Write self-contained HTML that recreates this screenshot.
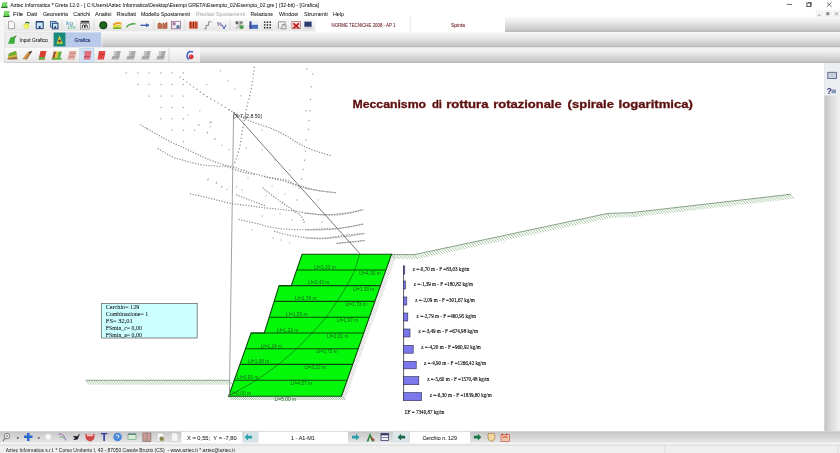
<!DOCTYPE html>
<html><head><meta charset="utf-8"><title>Greta</title>
<style>html,body{margin:0;padding:0;background:#fff;overflow:hidden;}svg{display:block;will-change:transform;}</style></head>
<body><svg width="840" height="453" viewBox="0 0 840 453">
<defs>
<linearGradient id="gbar" x1="0" y1="0" x2="0" y2="1">
<stop offset="0" stop-color="#f7f7f7"/><stop offset="0.3" stop-color="#ebebeb"/><stop offset="0.82" stop-color="#cbcbcb"/><stop offset="1" stop-color="#b8b8b8"/></linearGradient>
<linearGradient id="gtb1" x1="0" y1="0" x2="0" y2="1">
<stop offset="0" stop-color="#fbfbfb"/><stop offset="1" stop-color="#e6e6e6"/></linearGradient>
<linearGradient id="gbot" x1="0" y1="0" x2="0" y2="1">
<stop offset="0" stop-color="#c2c2c2"/><stop offset="0.2" stop-color="#cdcdcd"/><stop offset="0.85" stop-color="#e2e2e2"/><stop offset="1" stop-color="#ececec"/></linearGradient>
<linearGradient id="gside" x1="0" y1="0" x2="1" y2="0">
<stop offset="0" stop-color="#c2c2c2"/><stop offset="0.5" stop-color="#dedede"/><stop offset="1" stop-color="#f2f2f2"/></linearGradient>
</defs>
<rect x="0" y="0" width="840" height="453" fill="#ffffff"/>
<path d="M2.6 2.4 H7.4 L7.2 4.2 L5.2 4.6 L7.4 5.6 V7.4 H1.3 Z" fill="#48c040"/><path d="M3.4 3.2 H6.4 L4.4 5.2 L6.6 6.4 H2.6 Z" fill="#8ae070"/><line x1="1.3" y1="7.4" x2="7.4" y2="7.4" stroke="#0a4a0a" stroke-width="0.9"/>
<text x="10.5" y="7" font-family="Liberation Sans, sans-serif" font-size="5.8" fill="#1a1a1a" stroke="#1a1a1a" stroke-width="0.05" textLength="308.5" lengthAdjust="spacingAndGlyphs">Aztec Informatica * Greta 12.0 - [ C:\Users\Aztec Informatica\Desktop\Esempi GRETA\Esempio_02\Esempio_02.gre ] (32-bit) - [Grafica]</text>
<line x1="786.7" y1="4.4" x2="792" y2="4.4" stroke="#333" stroke-width="0.7"/>
<rect x="806.9" y="3" width="3.8" height="3.6" fill="none" stroke="#333" stroke-width="0.8"/><path d="M807.8 2.5 H811.4 V6" fill="none" stroke="#333" stroke-width="0.6"/>
<path d="M826.8 2.2 L831.6 6.8 M831.6 2.2 L826.8 6.8" stroke="#333" stroke-width="0.7"/>
<path d="M4.4 11.3 H9.5 L9.3 13.2 L7.2 13.6 L9.5 14.6 V16.6 H3.3 Z" fill="#48c040"/><path d="M5.2 12.1 H8.4 L6.3 14.2 L8.6 15.5 H4.5 Z" fill="#8ae070"/><line x1="3.3" y1="16.6" x2="9.5" y2="16.6" stroke="#0a4a0a" stroke-width="0.9"/>
<text x="13" y="16.1" font-family="Liberation Sans, sans-serif" font-size="5.8" fill="#1a1a1a" stroke="#1a1a1a" stroke-width="0.05" textLength="10.5" lengthAdjust="spacingAndGlyphs">File</text>
<text x="26.7" y="16.1" font-family="Liberation Sans, sans-serif" font-size="5.8" fill="#1a1a1a" stroke="#1a1a1a" stroke-width="0.05" textLength="10.5" lengthAdjust="spacingAndGlyphs">Dati</text>
<text x="42.9" y="16.1" font-family="Liberation Sans, sans-serif" font-size="5.8" fill="#1a1a1a" stroke="#1a1a1a" stroke-width="0.05" textLength="25" lengthAdjust="spacingAndGlyphs">Geometria</text>
<text x="73.3" y="16.1" font-family="Liberation Sans, sans-serif" font-size="5.8" fill="#1a1a1a" stroke="#1a1a1a" stroke-width="0.05" textLength="17" lengthAdjust="spacingAndGlyphs">Carichi</text>
<text x="94.9" y="16.1" font-family="Liberation Sans, sans-serif" font-size="5.8" fill="#1a1a1a" stroke="#1a1a1a" stroke-width="0.05" textLength="16.5" lengthAdjust="spacingAndGlyphs">Analisi</text>
<text x="116.6" y="16.1" font-family="Liberation Sans, sans-serif" font-size="5.8" fill="#1a1a1a" stroke="#1a1a1a" stroke-width="0.05" textLength="19.5" lengthAdjust="spacingAndGlyphs">Risultati</text>
<text x="141" y="16.1" font-family="Liberation Sans, sans-serif" font-size="5.8" fill="#1a1a1a" stroke="#1a1a1a" stroke-width="0.05" textLength="49" lengthAdjust="spacingAndGlyphs">Modello Spostamenti</text>
<text x="196" y="16.1" font-family="Liberation Sans, sans-serif" font-size="5.6" fill="#a0a0a0" textLength="49" lengthAdjust="spacingAndGlyphs">Risultati Spostamenti</text>
<text x="250.6" y="16.1" font-family="Liberation Sans, sans-serif" font-size="5.8" fill="#1a1a1a" stroke="#1a1a1a" stroke-width="0.05" textLength="22.4" lengthAdjust="spacingAndGlyphs">Relazione</text>
<text x="279" y="16.1" font-family="Liberation Sans, sans-serif" font-size="5.8" fill="#1a1a1a" stroke="#1a1a1a" stroke-width="0.05" textLength="19" lengthAdjust="spacingAndGlyphs">Window</text>
<text x="304" y="16.1" font-family="Liberation Sans, sans-serif" font-size="5.8" fill="#1a1a1a" stroke="#1a1a1a" stroke-width="0.05" textLength="23.8" lengthAdjust="spacingAndGlyphs">Strumenti</text>
<text x="333" y="16.1" font-family="Liberation Sans, sans-serif" font-size="5.8" fill="#1a1a1a" stroke="#1a1a1a" stroke-width="0.05" textLength="11" lengthAdjust="spacingAndGlyphs">Help</text>
<rect x="816" y="10.8" width="7" height="6" fill="#f4f4f4" stroke="#e0e0e0" stroke-width="0.3"/>
<rect x="824.5" y="10.8" width="7" height="6" fill="#f4f4f4" stroke="#e0e0e0" stroke-width="0.3"/>
<rect x="833" y="10.8" width="7" height="6" fill="#f4f4f4" stroke="#e0e0e0" stroke-width="0.3"/>
<line x1="818" y1="15.2" x2="820.5" y2="15.2" stroke="#666" stroke-width="0.6"/>
<rect x="826.3" y="12.2" width="3" height="3" fill="#888"/>
<path d="M835 12.3 L838 15.3 M838 12.3 L835 15.3" stroke="#666" stroke-width="0.6"/>
<rect x="5" y="18" width="311.5" height="13.5" fill="url(#gtb1)"/>
<rect x="505" y="17" width="335" height="15" fill="url(#gbar)"/>
<rect x="315.5" y="17" width="94.5" height="14.5" fill="#ffffff"/>
<rect x="410.8" y="17" width="94.2" height="14.5" fill="#ffffff"/>
<line x1="410.3" y1="17" x2="410.3" y2="31.5" stroke="#d8d8d8" stroke-width="0.6"/>
<text x="363.5" y="27.4" font-family="Liberation Sans, sans-serif" font-size="5.2" fill="#6a1c24" stroke="#6a1c24" stroke-width="0.08" text-anchor="middle" textLength="64" lengthAdjust="spacingAndGlyphs">NORME TECNICHE 2008 - AP 1</text>
<text x="458" y="27.4" font-family="Liberation Sans, sans-serif" font-size="5.2" fill="#6a1c24" stroke="#6a1c24" stroke-width="0.08" text-anchor="middle" textLength="14" lengthAdjust="spacingAndGlyphs">Spinta</text>
<g transform="translate(8,20.8)"><path d="M0.5 0.5 H4.5 L6.5 2.5 V7.8 H0.5 Z" fill="#fafafa" stroke="#777" stroke-width="0.6"/></g>
<g transform="translate(22,20.8)"><ellipse cx="4.3" cy="5.3" rx="3" ry="2.6" fill="#e2e84a"/><ellipse cx="3.8" cy="5.8" rx="1.6" ry="1.3" fill="#f4f480"/><path d="M3.2 2.6 Q5.6 0.6 7.4 2.6" stroke="#2a6a2a" stroke-width="1.1" fill="none"/></g>
<g transform="translate(35.7,20.8)"><path d="M0.5 0.8 H7.5 V7.8 H0.5 Z" fill="#c8e8f8" stroke="#1e3a6e" stroke-width="1"/><rect x="0.5" y="0.4" width="7" height="1.2" fill="#1e3a6e"/><circle cx="4" cy="6.2" r="1.1" fill="#14304e"/></g>
<g transform="translate(50,20.8)"><rect x="0.5" y="0.6" width="5.6" height="5.6" fill="#c8e8f8" stroke="#3a5a8e" stroke-width="0.9"/><rect x="2.4" y="2.4" width="5.6" height="5.6" fill="#c8e8f8" stroke="#1e3a6e" stroke-width="1"/><circle cx="5.2" cy="6.4" r="1" fill="#14304e"/></g>
<line x1="62" y1="19.5" x2="62" y2="30" stroke="#c8c8c8" stroke-width="0.5"/>
<g transform="translate(66,20.8)"><text x="0.3" y="4" font-family="Liberation Sans, sans-serif" font-size="5.2" fill="#3a88b0" textLength="6.6" lengthAdjust="spacingAndGlyphs">kg</text><text x="1.5" y="8.3" font-family="Liberation Sans, sans-serif" font-size="5.2" fill="#50b080" textLength="8.3" lengthAdjust="spacingAndGlyphs">cm</text></g>
<g transform="translate(80,20.8)"><rect x="0.7" y="0" width="8.5" height="1.8" fill="#333"/><rect x="0.7" y="2.6" width="8.5" height="5.6" fill="#f4f4f4" stroke="#555" stroke-width="0.5"/><path d="M2.3 7 V5.3 A1.2 1.2 0 0 1 4.7 5.3 V7 M4.9 7 V5.3 A1.2 1.2 0 0 1 7.3 5.3 V7" stroke="#111" stroke-width="0.9" fill="none"/></g>
<line x1="94" y1="19.5" x2="94" y2="30" stroke="#c8c8c8" stroke-width="0.5"/>
<g transform="translate(99,20.8)"><circle cx="4.3" cy="4.5" r="4" fill="#164a18"/><circle cx="4.3" cy="4.5" r="2.6" fill="#1e6a22"/></g>
<g transform="translate(112.5,20.8)"><path d="M0.5 3 Q5 0 9 2 L9 4 Q5 2 0.5 5 Z" fill="#e8a020"/><path d="M0.5 5 Q5 3 9 4.5 L9 6.5 Q5 5 0.5 7.5 Z" fill="#e6d83a"/><path d="M0.5 7 Q5 5.5 9 7 V8.3 H0.5 Z" fill="#7ab030"/></g>
<g transform="translate(126,20.8)"><path d="M0.5 6.5 Q3 2.5 9.5 3" stroke="#4aa040" stroke-width="1.3" fill="none"/></g>
<g transform="translate(140,20.8)"><path d="M0.5 4.5 H9" stroke="#3a5ab0" stroke-width="1.3"/><path d="M6 2.5 L9.5 4.5 L6 6.5" fill="#3a5ab0"/></g>
<line x1="154" y1="19.5" x2="154" y2="30" stroke="#c8c8c8" stroke-width="0.5"/>
<g transform="translate(157.5,20.8)"><path d="M0.5 8 V3 L2 2 V8 M3 8 V2.5 L4.5 3.5 V8 M5.5 8 V2 L7 3 V8 M8 8 V2.5 L9.5 1.5 V8" fill="#c87a50" stroke="#a04020" stroke-width="0.6"/></g>
<g transform="translate(171,20.8)"><rect x="0.5" y="0.5" width="9" height="7.5" fill="none" stroke="#8a5a8a" stroke-width="0.7"/><rect x="1.5" y="1.5" width="3" height="3" fill="#a070a0"/><rect x="5.5" y="4.5" width="3" height="3" fill="#5070a0"/></g>
<line x1="185" y1="19.5" x2="185" y2="30" stroke="#c8c8c8" stroke-width="0.5"/>
<g transform="translate(188.6,20.8)"><rect x="0.3" y="0.8" width="9" height="7" fill="#e07050"/><path d="M2.2 0.8 V7.8 M4.8 0.8 V7.8 M7.4 0.8 V7.8" stroke="#902010" stroke-width="1"/></g>
<g transform="translate(203.6,20.8)"><path d="M0.5 8 H2.5 V4.5 H5 V1 H8" fill="none" stroke="#444" stroke-width="0.6"/></g>
<g transform="translate(217,20.8)"><text x="0" y="5" font-family="Liberation Sans, sans-serif" font-size="5.5" fill="#8060a0" font-weight="bold">%</text><path d="M5 4 L7 8 L9 4" stroke="#3a5ab0" stroke-width="1" fill="none"/></g>
<line x1="230" y1="19.5" x2="230" y2="30" stroke="#c8c8c8" stroke-width="0.5"/>
<g transform="translate(235,20.8)"><path d="M1 8 L8 0.5" stroke="#555" stroke-width="0.6"/><rect x="0.5" y="0.5" width="3" height="3" fill="#6a6a6a"/><rect x="4.5" y="4.5" width="4" height="3.5" fill="#4a9a4a"/><rect x="4.5" y="0.5" width="3" height="3" fill="#888"/></g>
<g transform="translate(249,20.8)"><rect x="0.5" y="0.5" width="8.5" height="7.5" fill="#e8eef8"/><rect x="0.5" y="4" width="8.5" height="4" fill="#4a6ac0"/><rect x="0.5" y="0.5" width="2" height="7.5" fill="#3a4a90"/></g>
<g transform="translate(263.6,20.8)"><rect x="0.3" y="0.6" width="1.5" height="1.5" fill="#222"/><rect x="0.3" y="3.4" width="1.5" height="1.5" fill="#222"/><rect x="0.3" y="6.199999999999999" width="1.5" height="1.5" fill="#222"/><rect x="3.0999999999999996" y="0.6" width="1.5" height="1.5" fill="#222"/><rect x="3.0999999999999996" y="3.4" width="1.5" height="1.5" fill="#222"/><rect x="3.0999999999999996" y="6.199999999999999" width="1.5" height="1.5" fill="#222"/><rect x="5.8999999999999995" y="0.6" width="1.5" height="1.5" fill="#222"/><rect x="5.8999999999999995" y="3.4" width="1.5" height="1.5" fill="#222"/><rect x="5.8999999999999995" y="6.199999999999999" width="1.5" height="1.5" fill="#222"/></g>
<g transform="translate(277.9,20.8)"><path d="M0.5 8 V1 H8 M2.5 8 L7.5 2 M4 4 H8 V8 H3" fill="none" stroke="#555" stroke-width="0.6"/></g>
<g transform="translate(291.4,20.8)"><rect x="0.5" y="0.5" width="8.5" height="7.5" fill="#f0d8d8" stroke="#a04040" stroke-width="0.5"/><path d="M2 2.5 L7.5 7.5 M7.5 2.5 L2 7.5" stroke="#c01818" stroke-width="1.6"/></g>
<g transform="translate(304,20.8)"><rect x="0.5" y="1" width="7" height="5" fill="#2a3a6a" stroke="#6a7aa0" stroke-width="0.5"/><rect x="1" y="6.5" width="8" height="1.6" fill="#d0d0d8"/></g>
<rect x="0" y="32.2" width="840" height="15.1" fill="url(#gbar)"/>
<line x1="0" y1="47.3" x2="840" y2="47.3" stroke="#c4c4c4" stroke-width="0.6"/>
<rect x="4.6" y="32.5" width="48.4" height="14.6" fill="#ececec" stroke="#d6d6d6" stroke-width="0.4"/>
<path d="M8 43.7 L10.5 37.5 L14 36.5 L16.4 35.9 L15 38.5 L14.5 43.7 Z" fill="#3ab03a"/><path d="M14.5 36.5 L16.4 35.9" stroke="#a02020" stroke-width="0.7"/>
<text x="19.6" y="41.9" font-family="Liberation Sans, sans-serif" font-size="5.8" fill="#1a1a1a" stroke="#1a1a1a" stroke-width="0.05" textLength="28.2" lengthAdjust="spacingAndGlyphs">Input Grafico</text>
<rect x="53.7" y="32.4" width="47.7" height="14.7" fill="#b8c9ea"/><line x1="101.9" y1="32.4" x2="101.9" y2="47" stroke="#fafafa" stroke-width="0.7"/>
<rect x="53.7" y="32.6" width="11.7" height="13.8" fill="#178a7a"/>
<path d="M56.5 44 L59.5 35.5 L62.8 44 Z" fill="#d8d838"/><circle cx="59.6" cy="41" r="1.4" fill="#7a3a2a"/><path d="M57 44 L62 44" stroke="#3a9a3a" stroke-width="0.8"/>
<text x="74.6" y="41.9" font-family="Liberation Sans, sans-serif" font-size="5.8" fill="#1a2a6a" stroke="#1a2a6a" stroke-width="0.12" textLength="15.7" lengthAdjust="spacingAndGlyphs">Grafica</text>
<rect x="0" y="47.6" width="840" height="15.4" fill="url(#gbar)"/>
<rect x="4.8" y="47.8" width="164" height="14.6" fill="url(#gtb1)"/>
<rect x="169" y="47.8" width="31" height="14.6" fill="url(#gtb1)"/>
<g transform="translate(7,50.5)"><path d="M2 3 L9 0.5 L10.5 9 H0.5 Z" fill="#a07040"/><path d="M2 3 L9 0.5 L9.5 4 L1.5 6 Z" fill="#6ab030"/><path d="M1.2 6 L9.5 4 L9.8 6 L1 7.5 Z" fill="#d0c040"/></g>
<g transform="translate(22.6,50.5)"><path d="M0 8.5 L5.5 1.5 L9.5 0.5 L4.5 9 Z" fill="#b07a3a"/><path d="M1 7.5 L5 2.5 L6.5 2.2 L2.5 8 Z" fill="#e0a050"/><path d="M6 1.5 L9.5 0.5 L8 3.5 Z" fill="#3a3a3a"/></g>
<g transform="translate(38,50.5)"><path d="M2.5 0.5 H8.5 L6.5 9 H0.5 Z" fill="#d84030"/><path d="M1.1 6.5 H7.1 L6.5 9 H0.5 Z" fill="#5ab040"/></g>
<g transform="translate(51.8,50.5)"><path d="M2 1 H4.5 L2.5 9 H0 Z" fill="#a05030"/><path d="M4.5 1 H7 L5 9 H2.5 Z" fill="#e0c030"/><path d="M7 1 H10 L8 9 H5 Z" fill="#60b040"/><path d="M0 7.5 H10 V9 H0 Z" fill="#58b038"/></g>
<g transform="translate(67,50.5)"><path d="M2.5 0.5 H9.5 L7.5 9 H0.5 Z" fill="#e0a8a0"/><path d="M3 3 H8.8 M2.2 6 H8" stroke="#c07870" stroke-width="0.6"/></g>
<rect x="79.8" y="48.2" width="14.2" height="14" fill="#d2e2f4" stroke="#a8c4e4" stroke-width="0.4"/>
<g transform="translate(83,50.5)"><path d="M2 0.5 H8.5 L7 9 H0.5 Z" fill="#e07080"/><path d="M0.5 2 L2 0.5" stroke="#3a8ac0" stroke-width="0.6"/><path d="M1 6 H7.5" stroke="#804050" stroke-width="0.6"/></g>
<g transform="translate(97,50.5)"><path d="M2 0.5 H8.5 L7 9 H0.5 Z" fill="#e04848"/><path d="M1.5 4 H8" stroke="#b02828" stroke-width="0.5"/></g>
<g transform="translate(111,50.5)"><path d="M3.5 0.5 H9.8 L7.8 9 H0.3 L1.2 6 H2.6 Z" fill="#ababab"/><path d="M3.5 0.5 H6 L4.6 6 H2.6 Z" fill="#c4c4c4"/><path d="M1.1 6.3 H8.5" stroke="#8c8c8c" stroke-width="0.5"/></g>
<g transform="translate(126,50.5)"><path d="M3.5 0.5 H9.8 L7.8 9 H0.3 L1.2 6 H2.6 Z" fill="#ababab"/><path d="M3.5 0.5 H6 L4.6 6 H2.6 Z" fill="#c4c4c4"/><path d="M1.1 6.3 H8.5" stroke="#8c8c8c" stroke-width="0.5"/></g>
<g transform="translate(141,50.5)"><path d="M3.5 0.5 H9.8 L7.8 9 H0.3 L1.2 6 H2.6 Z" fill="#ababab"/><path d="M3.5 0.5 H6 L4.6 6 H2.6 Z" fill="#c4c4c4"/><path d="M1.1 6.3 H8.5" stroke="#8c8c8c" stroke-width="0.5"/></g>
<g transform="translate(156,50.5)"><path d="M3.5 0.5 H9.8 L7.8 9 H0.3 L1.2 6 H2.6 Z" fill="#ababab"/><path d="M3.5 0.5 H6 L4.6 6 H2.6 Z" fill="#c4c4c4"/><path d="M1.1 6.3 H8.5" stroke="#8c8c8c" stroke-width="0.5"/></g>
<line x1="169" y1="48.5" x2="169" y2="62" stroke="#b8b8b8" stroke-width="0.5"/>
<g transform="translate(185,50.5)"><path d="M8 1.6 Q4 -0.2 2.4 3.5 Q1 7.8 4.5 8.6" stroke="#4a6ec8" stroke-width="1.7" fill="none"/><circle cx="6.2" cy="6.3" r="2.4" fill="#d82838"/><circle cx="5.6" cy="5.6" r="0.8" fill="#f08080"/></g>
<rect x="0" y="17.5" width="4.5" height="45.5" fill="#f6f6f6"/><line x1="4.6" y1="17.5" x2="4.6" y2="63" stroke="#dcdcdc" stroke-width="0.5"/>
<rect x="0" y="63" width="824.3" height="368.3" fill="#ffffff"/>
<clipPath id="cv"><rect x="0" y="63" width="824.3" height="368.3"/></clipPath>
<g clip-path="url(#cv)">
<rect x="125.7" y="72.3" width="1.2" height="1.2" fill="#a0a0a0"/>
<rect x="137.2" y="72.3" width="1.2" height="1.2" fill="#a0a0a0"/>
<rect x="148.5" y="72.3" width="1.2" height="1.2" fill="#a0a0a0"/>
<rect x="160.4" y="72.3" width="1.2" height="1.2" fill="#a0a0a0"/>
<rect x="171.6" y="72.3" width="1.2" height="1.2" fill="#a0a0a0"/>
<rect x="182.7" y="72.3" width="1.2" height="1.2" fill="#a0a0a0"/>
<rect x="137.2" y="83.8" width="1.2" height="1.2" fill="#a0a0a0"/>
<rect x="148.5" y="83.8" width="1.2" height="1.2" fill="#a0a0a0"/>
<rect x="160.4" y="83.8" width="1.2" height="1.2" fill="#a0a0a0"/>
<rect x="171.6" y="83.8" width="1.2" height="1.2" fill="#a0a0a0"/>
<rect x="182.7" y="83.8" width="1.2" height="1.2" fill="#a0a0a0"/>
<rect x="148.5" y="95.5" width="1.2" height="1.2" fill="#a0a0a0"/>
<rect x="160.4" y="95.5" width="1.2" height="1.2" fill="#a0a0a0"/>
<rect x="171.6" y="95.5" width="1.2" height="1.2" fill="#a0a0a0"/>
<rect x="182.7" y="95.5" width="1.2" height="1.2" fill="#a0a0a0"/>
<rect x="160.4" y="107.0" width="1.2" height="1.2" fill="#a0a0a0"/>
<rect x="171.6" y="107.0" width="1.2" height="1.2" fill="#a0a0a0"/>
<rect x="182.7" y="107.0" width="1.2" height="1.2" fill="#a0a0a0"/>
<rect x="160.4" y="118.2" width="1.2" height="1.2" fill="#a0a0a0"/>
<rect x="171.6" y="118.2" width="1.2" height="1.2" fill="#a0a0a0"/>
<rect x="182.7" y="118.2" width="1.2" height="1.2" fill="#a0a0a0"/>
<rect x="171.6" y="129.7" width="1.2" height="1.2" fill="#a0a0a0"/>
<rect x="182.7" y="129.7" width="1.2" height="1.2" fill="#a0a0a0"/>
<rect x="194.0" y="129.7" width="1.2" height="1.2" fill="#a0a0a0"/>
<rect x="182.7" y="141.1" width="1.2" height="1.2" fill="#a0a0a0"/>
<path d="M228.90 110.00h1.20M231.19 111.42h1.20M233.57 112.70h1.20M235.94 113.99h1.20M238.31 115.29h1.20M240.69 116.57h1.20M243.07 117.83h1.20M245.48 119.06h1.20M247.91 120.24h1.20M250.37 121.35h1.20M252.87 122.37h1.20M255.41 123.29h1.20M257.97 124.15h1.20M260.54 124.97h1.20M263.11 125.79h1.20M265.68 126.63h1.20M268.23 127.51h1.20M270.75 128.48h1.20M273.23 129.54h1.20M275.68 130.67h1.20M278.11 131.86h1.20M280.50 133.10h1.20M282.88 134.38h1.20M285.25 135.68h1.20M287.60 137.00h1.20M289.92 138.39h1.20M292.20 139.83h1.20M294.48 141.28h1.20M296.77 142.71h1.20M299.09 144.09h1.20M301.46 145.38h1.20M303.89 146.55h1.20M306.36 147.64h1.20M308.86 148.67h1.20M311.38 149.64h1.20M313.92 150.57h1.20M316.46 151.47h1.20M319.01 152.35h1.20M321.59 153.15h1.20M324.18 153.91h1.20M326.78 154.63h1.20M329.39 155.35h1.20" stroke="#8a8a8a" stroke-width="1.20" opacity="1.0" fill="none"/>
<path d="M140.00 125.00h1.20M142.34 126.35h1.20M144.68 127.69h1.20M147.02 129.04h1.20M149.37 130.38h1.20M151.71 131.71h1.20M154.06 133.04h1.20M156.41 134.38h1.20M158.75 135.72h1.20M161.10 137.05h1.20M163.46 138.37h1.20M165.83 139.66h1.20M168.22 140.91h1.20M170.64 142.11h1.20M173.08 143.27h1.20M175.54 144.39h1.20M178.00 145.49h1.20M180.46 146.60h1.20M182.92 147.72h1.20M185.36 148.88h1.20M187.79 150.05h1.20M190.22 151.23h1.20M192.65 152.40h1.20M195.09 153.55h1.20M197.55 154.68h1.20M200.00 155.81h1.20M202.45 156.95h1.20M204.91 158.06h1.20M207.38 159.15h1.20M209.87 160.20h1.20M212.38 161.19h1.20M214.92 162.10h1.20M217.48 162.96h1.20M220.05 163.77h1.20M222.64 164.55h1.20M225.23 165.31h1.20M227.82 166.06h1.20M230.40 166.47h1.20M233.01 167.18h1.20M235.59 167.97h1.20M238.17 168.77h1.20M240.74 169.58h1.20M243.32 170.40h1.20M245.89 171.20h1.20M248.47 172.01h1.20M251.05 172.80h1.20M253.64 173.58h1.20M256.23 174.34h1.20M258.83 175.07h1.20M261.43 175.79h1.20M264.04 176.47h1.20M266.67 177.11h1.20M269.30 177.69h1.20M271.95 178.21h1.20M274.62 178.61h1.20M277.30 178.93h1.20M279.99 179.23h1.20M282.66 179.58h1.20M285.32 180.07h1.20M287.89 180.89h1.20M290.28 182.13h1.20M292.57 183.56h1.20M294.98 184.76h1.20M297.53 185.65h1.20M300.12 186.42h1.20M302.73 187.13h1.20M305.34 187.80h1.20M307.97 188.43h1.20M310.60 189.04h1.20M313.24 189.62h1.20M315.88 190.15h1.20M318.54 190.64h1.20M321.20 191.10h1.20M323.87 191.52h1.20M326.54 191.88h1.20M329.23 192.17h1.20M331.91 192.41h1.20M334.61 192.63h1.20" stroke="#8a8a8a" stroke-width="1.20" opacity="1.0" fill="none"/>
<path d="M157.70 148.80h1.20M160.02 150.19h1.20M162.32 151.59h1.20M164.64 152.98h1.20M166.98 154.33h1.20M169.35 155.61h1.20M171.78 156.79h1.20M174.28 157.81h1.20M176.83 158.69h1.20M179.42 159.47h1.20M182.02 160.18h1.20M184.63 160.87h1.20M187.24 161.56h1.20M189.86 162.24h1.20M192.48 162.89h1.20M195.11 163.50h1.20M197.75 164.07h1.20M200.40 164.57h1.20M203.07 164.98h1.20M205.75 165.31h1.20M208.44 165.56h1.20M211.13 165.77h1.20M213.82 165.95h1.20M216.52 166.12h1.20M219.21 166.27h1.20M221.91 166.23h1.20M224.61 166.28h1.20M227.25 166.80h1.20M229.80 167.70h1.20M232.29 168.75h1.20M234.78 169.78h1.20M237.32 170.70h1.20M239.91 171.44h1.20M242.53 172.10h1.20M245.16 172.72h1.20M247.79 173.32h1.20M250.43 173.90h1.20M253.07 174.48h1.20" stroke="#8a8a8a" stroke-width="1.20" opacity="1.0" fill="none"/>
<path d="M264.10 176.70h1.20M266.74 177.25h1.20M269.39 177.80h1.20M272.03 178.36h1.20M274.66 178.95h1.20M277.29 179.57h1.20M279.90 180.24h1.20M282.50 180.98h1.20M285.09 181.77h1.20M287.66 182.57h1.20M290.24 183.38h1.20M292.82 184.17h1.20M295.41 184.94h1.20M298.01 185.68h1.20M300.61 186.39h1.20M303.22 187.09h1.20M305.83 187.79h1.20M308.44 188.48h1.20" stroke="#8a8a8a" stroke-width="1.20" opacity="1.0" fill="none"/>
<path d="M190.00 193.90h1.20M192.63 194.49h1.20M195.27 195.08h1.20M197.91 195.67h1.20M200.54 196.26h1.20M203.17 196.85h1.20M205.80 197.46h1.20M208.43 198.07h1.20M211.06 198.70h1.20M213.68 199.36h1.20M216.29 200.03h1.20M218.91 200.71h1.20M221.52 201.38h1.20M224.14 202.05h1.20M226.76 202.70h1.20M229.39 203.32h1.20M232.03 203.86h1.20M234.70 204.26h1.20M237.39 204.44h1.20M240.08 204.69h1.20M242.76 205.03h1.20M245.44 205.38h1.20M248.12 205.73h1.20M250.79 206.09h1.20M253.47 206.44h1.20M256.15 206.79h1.20M258.82 207.14h1.20M261.50 207.48h1.20M264.18 207.81h1.20M266.86 208.12h1.20M269.55 208.42h1.20M272.23 208.70h1.20M274.92 208.97h1.20M277.61 209.23h1.20M280.29 209.49h1.20M282.98 209.76h1.20M285.67 210.04h1.20M288.35 210.33h1.20M291.03 210.66h1.20M293.70 211.02h1.20M296.37 211.44h1.20M299.03 211.89h1.20M301.69 212.36h1.20M304.36 212.79h1.20M307.03 213.18h1.20M309.71 213.53h1.20M312.38 213.90h1.20M315.06 214.25h1.20M317.74 214.57h1.20M320.43 214.85h1.20M323.12 215.06h1.20M325.81 215.20h1.20M328.51 215.25h1.20M331.21 215.23h1.20M333.91 215.14h1.20M336.61 214.97h1.20M339.29 214.71h1.20M341.97 214.38h1.20M344.64 213.96h1.20M347.29 213.44h1.20M349.93 212.86h1.20M352.55 212.24h1.20M355.17 211.59h1.20M357.79 210.92h1.20M360.41 210.25h1.20" stroke="#8a8a8a" stroke-width="1.20" opacity="1.0" fill="none"/>
<path d="M236.00 194.90h1.20M238.51 195.88h1.20M241.03 196.87h1.20M243.54 197.85h1.20M246.06 198.83h1.20M248.58 199.81h1.20M251.10 200.77h1.20M253.62 201.73h1.20M256.15 202.67h1.20M258.69 203.61h1.20M261.22 204.54h1.20M263.75 205.47h1.20" stroke="#8a8a8a" stroke-width="1.20" opacity="1.0" fill="none"/>
<path d="M238.60 219.50h1.20M241.23 220.10h1.20M243.87 220.69h1.20M246.50 221.28h1.20M249.13 221.88h1.20M251.77 222.48h1.20M254.40 223.09h1.20M257.02 223.71h1.20M259.64 224.37h1.20M262.25 225.09h1.20M264.84 225.83h1.20M267.44 226.55h1.20M270.06 227.21h1.20M272.71 227.76h1.20M275.37 228.19h1.20M278.05 228.52h1.20M280.74 228.79h1.20M283.43 229.00h1.20M286.12 229.19h1.20M288.82 229.35h1.20M291.51 229.48h1.20M294.21 229.61h1.20M296.91 229.71h1.20M299.61 229.75h1.20M302.31 229.73h1.20M305.01 229.66h1.20M307.71 229.59h1.20M310.40 229.49h1.20M313.10 229.36h1.20M315.80 229.22h1.20M318.49 229.08h1.20M321.19 228.94h1.20M323.89 228.82h1.20M326.59 228.76h1.20M329.29 228.79h1.20M331.99 228.83h1.20M334.68 228.75h1.20M337.37 228.52h1.20M340.05 228.17h1.20M342.72 227.76h1.20M345.38 227.30h1.20M348.04 226.83h1.20M350.69 226.34h1.20M353.35 225.84h1.20M356.00 225.33h1.20M358.65 224.82h1.20M361.30 224.32h1.20" stroke="#8a8a8a" stroke-width="1.20" opacity="1.0" fill="none"/>
<path d="M274.10 231.30h1.20M276.66 232.15h1.20M279.24 232.96h1.20M281.84 233.67h1.20M284.48 234.26h1.20M287.13 234.79h1.20M289.78 235.29h1.20M292.44 235.76h1.20M295.10 236.22h1.20M297.76 236.66h1.20M300.43 237.10h1.20M303.10 237.47h1.20M305.78 237.77h1.20M308.47 238.01h1.20M311.16 238.24h1.20M313.85 238.45h1.20M316.55 238.62h1.20M319.25 238.74h1.20M321.95 238.77h1.20M324.64 238.68h1.20M327.32 238.36h1.20M329.96 237.79h1.20M332.58 237.12h1.20M335.21 236.53h1.20M337.87 236.08h1.20M340.55 235.73h1.20M343.23 235.43h1.20M345.92 235.15h1.20M348.60 234.87h1.20M351.29 234.61h1.20M353.98 234.35h1.20M356.67 234.10h1.20M359.36 233.85h1.20M362.04 233.60h1.20" stroke="#8a8a8a" stroke-width="1.20" opacity="1.0" fill="none"/>
<path d="M336.40 243.40h1.20M339.09 243.16h1.20M341.78 242.92h1.20M344.47 242.68h1.20M347.16 242.43h1.20M349.84 242.15h1.20M352.53 241.86h1.20M355.21 241.55h1.20M357.89 241.24h1.20M360.57 240.92h1.20M363.25 240.60h1.20" stroke="#8a8a8a" stroke-width="1.20" opacity="1.0" fill="none"/>
<path d="M262.40 188.20h1.20M264.52 189.87h1.20M266.63 191.55h1.20M268.75 193.22h1.20M270.88 194.89h1.20M273.02 196.53h1.20M275.18 198.16h1.20M277.35 199.76h1.20M279.56 201.32h1.20M281.79 202.83h1.20M284.04 204.33h1.20M286.29 205.82h1.20M288.54 207.30h1.20M290.79 208.80h1.20M293.03 210.32h1.20M295.24 211.87h1.20M297.40 213.48h1.20M299.46 215.22h1.20M301.27 217.22h1.20M302.64 219.54h1.20M303.52 222.09h1.20" stroke="#8a8a8a" stroke-width="1.20" opacity="1.0" fill="none"/>
<path d="M179.40 77.00h1.20M182.77 79.50h1.20M186.15 82.00h1.20M189.53 84.49h1.20M192.91 86.99h1.20M196.29 89.47h1.20M199.70 91.93h1.20M203.12 94.37h1.20M206.60 96.71h1.20M210.24 98.82h1.20M213.92 100.84h1.20M217.52 103.00h1.20M221.10 105.20h1.20M224.68 107.40h1.20M228.25 109.60h1.20" stroke="#8a8a8a" stroke-width="1.20" opacity="1.0" fill="none"/>
<path d="M253.70 67.30h1.20M253.25 70.87h1.20M252.81 74.44h1.20M252.35 78.01h1.20M251.85 81.58h1.20M251.29 85.14h1.20M250.63 88.68h1.20M249.90 92.20h1.20M249.11 95.71h1.20M248.30 99.22h1.20M247.26 102.67h1.20M246.38 106.15h1.20M245.66 109.68h1.20M244.96 113.21h1.20M244.28 116.75h1.20M243.62 120.29h1.20M242.95 123.83h1.20M242.30 127.37h1.20M241.66 130.91h1.20M241.06 134.46h1.20M240.58 138.03h1.20M240.17 141.60h1.20M239.52 145.14h1.20M238.74 148.66h1.20M237.81 152.13h1.20M236.74 155.57h1.20M235.57 158.97h1.20M234.35 162.36h1.20" stroke="#8a8a8a" stroke-width="1.20" opacity="1.0" fill="none"/>
<rect x="306.2" y="68.2" width="1.2" height="1.2" fill="#9a9a9a"/>
<rect x="312.2" y="73.4" width="1.2" height="1.2" fill="#9a9a9a"/>
<rect x="310.7" y="86.2" width="1.2" height="1.2" fill="#9a9a9a"/>
<rect x="309.9" y="98.9" width="1.2" height="1.2" fill="#9a9a9a"/>
<rect x="305.4" y="110.2" width="1.2" height="1.2" fill="#9a9a9a"/>
<rect x="309.2" y="110.2" width="1.2" height="1.2" fill="#9a9a9a"/>
<rect x="308.4" y="119.9" width="1.2" height="1.2" fill="#9a9a9a"/>
<rect x="307.9" y="128.70000000000002" width="1.2" height="1.2" fill="#9a9a9a"/>
<rect x="305.4" y="139.4" width="1.2" height="1.2" fill="#9a9a9a"/>
<rect x="304.79999999999995" y="150.4" width="1.2" height="1.2" fill="#9a9a9a"/>
<rect x="304.0" y="159.6" width="1.2" height="1.2" fill="#9a9a9a"/>
<rect x="302.4" y="168.9" width="1.2" height="1.2" fill="#9a9a9a"/>
<rect x="300.9" y="178.1" width="1.2" height="1.2" fill="#9a9a9a"/>
<rect x="298.59999999999997" y="187.4" width="1.2" height="1.2" fill="#9a9a9a"/>
<rect x="296.4" y="199.4" width="1.2" height="1.2" fill="#9a9a9a"/>
<rect x="294.4" y="211.4" width="1.2" height="1.2" fill="#9a9a9a"/>
<path d="M305 188.5 Q322 191.5 336 192.7" fill="none" stroke="#a0a0a0" stroke-width="0.7"/>
<path d="M305 213.2 Q333 217.5 363.6 209.6" fill="none" stroke="#949494" stroke-width="0.7"/>
<path d="M305 229.8 Q335 231 363.6 224" fill="none" stroke="#949494" stroke-width="0.7"/>
<path d="M305 238 Q335 239.5 364.7 233.4" fill="none" stroke="#989898" stroke-width="0.7"/>
<path d="M337 243.4 L364.7 240.5" fill="none" stroke="#989898" stroke-width="0.7"/>
<rect x="214.25" y="138.54999999999998" width="1.1" height="1.1" fill="#a4a4a4"/>
<rect x="221.25" y="144.75" width="1.1" height="1.1" fill="#a4a4a4"/>
<rect x="228.35" y="149.14999999999998" width="1.1" height="1.1" fill="#a4a4a4"/>
<rect x="207.14999999999998" y="179.25" width="1.1" height="1.1" fill="#a4a4a4"/>
<rect x="215.95" y="181.85" width="1.1" height="1.1" fill="#a4a4a4"/>
<rect x="221.25" y="186.25" width="1.1" height="1.1" fill="#a4a4a4"/>
<rect x="187.75" y="114.75" width="1.1" height="1.1" fill="#a4a4a4"/>
<rect x="146.25" y="127.95" width="1.1" height="1.1" fill="#a4a4a4"/>
<rect x="199.25" y="110.15" width="1.1" height="1.1" fill="#a4a4a4"/>
<rect x="198.14999999999998" y="124.25" width="1.1" height="1.1" fill="#a4a4a4"/>
<rect x="206.85" y="131.75" width="1.1" height="1.1" fill="#a4a4a4"/>
<rect x="214.45" y="138.25" width="1.1" height="1.1" fill="#a4a4a4"/>
<rect x="209.04999999999998" y="122.05" width="1.1" height="1.1" fill="#a4a4a4"/>
<rect x="210.75" y="121.85000000000001" width="1.1" height="1.1" fill="#a4a4a4"/>
<rect x="209.85" y="126.25" width="1.1" height="1.1" fill="#a4a4a4"/>
<rect x="198.45" y="124.45" width="1.1" height="1.1" fill="#a4a4a4"/>
<rect x="206.45" y="83.95" width="1.1" height="1.1" fill="#a4a4a4"/>
<rect x="219.95" y="70.45" width="1.1" height="1.1" fill="#a4a4a4"/>
<rect x="227.45" y="80.25" width="1.1" height="1.1" fill="#a4a4a4"/>
<rect x="234.25" y="88.45" width="1.1" height="1.1" fill="#a4a4a4"/>
<rect x="240.25" y="95.25" width="1.1" height="1.1" fill="#a4a4a4"/>
<rect x="210.25" y="121.45" width="1.1" height="1.1" fill="#a4a4a4"/>
<rect x="207.14999999999998" y="132.45" width="1.1" height="1.1" fill="#a4a4a4"/>
<rect x="207.75" y="178.25" width="1.1" height="1.1" fill="#a4a4a4"/>
<rect x="215.75" y="182.75" width="1.1" height="1.1" fill="#a4a4a4"/>
<rect x="221.04999999999998" y="186.25" width="1.1" height="1.1" fill="#a4a4a4"/>
<rect x="226.35" y="188.85" width="1.1" height="1.1" fill="#a4a4a4"/>
<rect x="236.04999999999998" y="186.25" width="1.1" height="1.1" fill="#a4a4a4"/>
<rect x="241.45" y="189.45" width="1.1" height="1.1" fill="#a4a4a4"/>
<rect x="247.45" y="177.45" width="1.1" height="1.1" fill="#a4a4a4"/>
<rect x="261.45" y="149.45" width="1.1" height="1.1" fill="#a4a4a4"/>
<rect x="274.45" y="159.45" width="1.1" height="1.1" fill="#a4a4a4"/>
<rect x="289.45" y="169.45" width="1.1" height="1.1" fill="#a4a4a4"/>
<rect x="245.45" y="147.45" width="1.1" height="1.1" fill="#a4a4a4"/>
<rect x="261.45" y="129.45" width="1.1" height="1.1" fill="#a4a4a4"/>
<rect x="282.45" y="201.45" width="1.1" height="1.1" fill="#a4a4a4"/>
<rect x="261.45" y="215.45" width="1.1" height="1.1" fill="#a4a4a4"/>
<rect x="251.45" y="229.45" width="1.1" height="1.1" fill="#a4a4a4"/>
<rect x="289.05" y="242.35" width="1.1" height="1.1" fill="#a4a4a4"/>
<rect x="272.45" y="237.45" width="1.1" height="1.1" fill="#a4a4a4"/>
<rect x="280.45" y="239.45" width="1.1" height="1.1" fill="#a4a4a4"/>
<rect x="265.45" y="195.45" width="1.1" height="1.1" fill="#a4a4a4"/>
<rect x="271.45" y="185.45" width="1.1" height="1.1" fill="#a4a4a4"/>
<rect x="284.45" y="193.45" width="1.1" height="1.1" fill="#a4a4a4"/>
<rect x="291.45" y="219.45" width="1.1" height="1.1" fill="#a4a4a4"/>
<rect x="279.45" y="213.45" width="1.1" height="1.1" fill="#a4a4a4"/>
<rect x="317.45" y="199.45" width="1.1" height="1.1" fill="#a4a4a4"/>
<rect x="321.45" y="221.45" width="1.1" height="1.1" fill="#a4a4a4"/>
<path d="M391.50 254.90 L395.02 258.90 M394.03 254.91 L397.55 258.91 M396.57 254.92 L400.09 258.92 M399.10 254.93 L402.62 258.93 M401.63 254.94 L405.15 258.94 M404.17 254.96 L407.69 258.96 M406.70 254.97 L410.22 258.97 M409.23 254.98 L412.75 258.98 M411.77 254.99 L415.29 258.99 M414.30 255.00 L417.82 259.00 " stroke="#94bf94" stroke-width="0.85" fill="none"/>
<path d="M414.30 255.00 L417.82 259.00 M416.77 254.47 L420.29 258.47 M419.25 253.95 L422.77 257.95 M421.72 253.42 L425.24 257.42 M424.20 252.89 L427.72 256.89 M426.67 252.37 L430.19 256.37 M429.15 251.84 L432.67 255.84 M431.62 251.31 L435.14 255.31 M434.09 250.78 L437.61 254.78 M436.57 250.26 L440.09 254.26 M439.04 249.73 L442.56 253.73 M441.52 249.20 L445.04 253.20 M443.99 248.68 L447.51 252.68 M446.47 248.15 L449.99 252.15 M448.94 247.62 L452.46 251.62 M451.42 247.10 L454.94 251.10 M453.89 246.57 L457.41 250.57 M456.36 246.04 L459.88 250.04 M458.84 245.52 L462.36 249.52 M461.31 244.99 L464.83 248.99 M463.79 244.46 L467.31 248.46 M466.26 243.93 L469.78 247.93 M468.74 243.41 L472.26 247.41 M471.21 242.88 L474.73 246.88 M473.68 242.35 L477.20 246.35 M476.16 241.83 L479.68 245.83 M478.63 241.30 L482.15 245.30 M481.11 240.77 L484.63 244.77 M483.58 240.25 L487.10 244.25 M486.06 239.72 L489.58 243.72 M488.53 239.19 L492.05 243.19 M491.01 238.67 L494.53 242.67 M493.48 238.14 L497.00 242.14 M495.95 237.61 L499.47 241.61 M498.43 237.08 L501.95 241.08 M500.90 236.56 L504.42 240.56 M503.38 236.03 L506.90 240.03 M505.85 235.50 L509.37 239.50 M508.33 234.98 L511.85 238.98 M510.80 234.45 L514.32 238.45 M513.27 233.92 L516.79 237.92 M515.75 233.40 L519.27 237.40 M518.22 232.87 L521.74 236.87 M520.70 232.34 L524.22 236.34 M523.17 231.82 L526.69 235.82 M525.65 231.29 L529.17 235.29 M528.12 230.76 L531.64 234.76 M530.59 230.23 L534.11 234.23 M533.07 229.71 L536.59 233.71 M535.54 229.18 L539.06 233.18 M538.02 228.65 L541.54 232.65 M540.49 228.13 L544.01 232.13 M542.97 227.60 L546.49 231.60 M545.44 227.07 L548.96 231.07 M547.92 226.55 L551.44 230.55 M550.39 226.02 L553.91 230.02 M552.86 225.49 L556.38 229.49 M555.34 224.97 L558.86 228.97 M557.81 224.44 L561.33 228.44 M560.29 223.91 L563.81 227.91 M562.76 223.38 L566.28 227.38 M565.24 222.86 L568.76 226.86 M567.71 222.33 L571.23 226.33 M570.18 221.80 L573.70 225.80 M572.66 221.28 L576.18 225.28 M575.13 220.75 L578.65 224.75 M577.61 220.22 L581.13 224.22 M580.08 219.70 L583.60 223.70 M582.56 219.17 L586.08 223.17 M585.03 218.64 L588.55 222.64 M587.51 218.12 L591.03 222.12 M589.98 217.59 L593.50 221.59 M592.45 217.06 L595.97 221.06 M594.93 216.53 L598.45 220.53 M597.40 216.01 L600.92 220.01 M599.88 215.48 L603.40 219.48 M602.35 214.95 L605.87 218.95 M604.83 214.43 L608.35 218.43 M607.30 213.90 L610.82 217.90 " stroke="#94bf94" stroke-width="0.85" fill="none"/>
<path d="M607.30 213.90 L610.82 217.90 M610.04 213.80 L613.56 217.80 M612.79 213.70 L616.31 217.70 M615.53 213.60 L619.05 217.60 M618.28 213.50 L621.80 217.50 M621.02 213.40 L624.54 217.40 M623.77 213.30 L627.29 217.30 M626.51 213.20 L630.03 217.20 M629.26 213.10 L632.78 217.10 M632.00 213.00 L635.52 217.00 " stroke="#94bf94" stroke-width="0.85" fill="none"/>
<path d="M632.00 213.00 L635.52 217.00 M634.52 212.71 L638.04 216.71 M637.03 212.42 L640.55 216.42 M639.55 212.13 L643.07 216.13 M642.06 211.84 L645.58 215.84 M644.58 211.55 L648.10 215.55 M647.10 211.26 L650.62 215.26 M649.61 210.97 L653.13 214.97 M652.13 210.68 L655.65 214.68 M654.64 210.39 L658.16 214.39 M657.16 210.10 L660.68 214.10 M659.67 209.80 L663.19 213.80 M662.19 209.51 L665.71 213.51 M664.71 209.22 L668.23 213.22 M667.22 208.93 L670.74 212.93 M669.74 208.64 L673.26 212.64 M672.25 208.35 L675.77 212.35 M674.77 208.06 L678.29 212.06 M677.29 207.77 L680.81 211.77 M679.80 207.48 L683.32 211.48 M682.32 207.19 L685.84 211.19 M684.83 206.90 L688.35 210.90 M687.35 206.61 L690.87 210.61 M689.87 206.32 L693.39 210.32 M692.38 206.03 L695.90 210.03 M694.90 205.74 L698.42 209.74 M697.41 205.45 L700.93 209.45 M699.93 205.16 L703.45 209.16 M702.44 204.87 L705.96 208.87 M704.96 204.58 L708.48 208.58 M707.48 204.29 L711.00 208.29 M709.99 204.00 L713.51 208.00 M712.51 203.70 L716.03 207.70 M715.02 203.41 L718.54 207.41 M717.54 203.12 L721.06 207.12 M720.06 202.83 L723.58 206.83 M722.57 202.54 L726.09 206.54 M725.09 202.25 L728.61 206.25 M727.60 201.96 L731.12 205.96 M730.12 201.67 L733.64 205.67 M732.63 201.38 L736.15 205.38 M735.15 201.09 L738.67 205.09 M737.67 200.80 L741.19 204.80 M740.18 200.51 L743.70 204.51 M742.70 200.22 L746.22 204.22 M745.21 199.93 L748.73 203.93 M747.73 199.64 L751.25 203.64 M750.25 199.35 L753.77 203.35 M752.76 199.06 L756.28 203.06 M755.28 198.77 L758.80 202.77 M757.79 198.48 L761.31 202.48 M760.31 198.19 L763.83 202.19 M762.83 197.90 L766.35 201.90 M765.34 197.60 L768.86 201.60 M767.86 197.31 L771.38 201.31 M770.37 197.02 L773.89 201.02 M772.89 196.73 L776.41 200.73 M775.40 196.44 L778.92 200.44 M777.92 196.15 L781.44 200.15 M780.44 195.86 L783.96 199.86 M782.95 195.57 L786.47 199.57 M785.47 195.28 L788.99 199.28 M787.98 194.99 L791.50 198.99 M790.50 194.70 L794.02 198.70 " stroke="#94bf94" stroke-width="0.85" fill="none"/>
<path d="M391.50 254.50 L414.30 254.60 L607.30 213.50 L632.00 212.60 L790.50 194.30" stroke="#5f835f" stroke-width="0.75" fill="none"/>
<path d="M86.00 380.70 L89.52 384.70 M88.51 380.70 L92.03 384.70 M91.02 380.70 L94.54 384.70 M93.53 380.70 L97.05 384.70 M96.04 380.70 L99.56 384.70 M98.54 380.70 L102.06 384.70 M101.05 380.70 L104.57 384.70 M103.56 380.70 L107.08 384.70 M106.07 380.70 L109.59 384.70 M108.58 380.70 L112.10 384.70 M111.09 380.70 L114.61 384.70 M113.60 380.70 L117.12 384.70 M116.11 380.70 L119.63 384.70 M118.61 380.70 L122.13 384.70 M121.12 380.70 L124.64 384.70 M123.63 380.70 L127.15 384.70 M126.14 380.70 L129.66 384.70 M128.65 380.70 L132.17 384.70 M131.16 380.70 L134.68 384.70 M133.67 380.70 L137.19 384.70 M136.18 380.70 L139.70 384.70 M138.68 380.70 L142.20 384.70 M141.19 380.70 L144.71 384.70 M143.70 380.70 L147.22 384.70 M146.21 380.70 L149.73 384.70 M148.72 380.70 L152.24 384.70 M151.23 380.70 L154.75 384.70 M153.74 380.70 L157.26 384.70 M156.25 380.70 L159.77 384.70 M158.75 380.70 L162.27 384.70 M161.26 380.70 L164.78 384.70 M163.77 380.70 L167.29 384.70 M166.28 380.70 L169.80 384.70 M168.79 380.70 L172.31 384.70 M171.30 380.70 L174.82 384.70 M173.81 380.70 L177.33 384.70 M176.32 380.70 L179.84 384.70 M178.82 380.70 L182.34 384.70 M181.33 380.70 L184.85 384.70 M183.84 380.70 L187.36 384.70 M186.35 380.70 L189.87 384.70 M188.86 380.70 L192.38 384.70 M191.37 380.70 L194.89 384.70 M193.88 380.70 L197.40 384.70 M196.39 380.70 L199.91 384.70 M198.89 380.70 L202.41 384.70 M201.40 380.70 L204.92 384.70 M203.91 380.70 L207.43 384.70 M206.42 380.70 L209.94 384.70 M208.93 380.70 L212.45 384.70 M211.44 380.70 L214.96 384.70 M213.95 380.70 L217.47 384.70 M216.46 380.70 L219.98 384.70 M218.96 380.70 L222.48 384.70 M221.47 380.70 L224.99 384.70 M223.98 380.70 L227.50 384.70 M226.49 380.70 L230.01 384.70 M229.00 380.70 L232.52 384.70 " stroke="#94bf94" stroke-width="0.85" fill="none"/>
<line x1="86" y1="380.3" x2="229.5" y2="380.3" stroke="#5f835f" stroke-width="0.75"/>
<path d="M392.00 255.00 L395.50 258.15 M391.32 256.91 L394.82 260.06 M390.65 258.81 L394.15 261.96 M389.97 260.72 L393.47 263.87 M389.30 262.62 L392.80 265.77 M388.62 264.53 L392.12 267.68 M387.95 266.43 L391.45 269.58 M387.27 268.34 L390.77 271.49 M386.59 270.24 L390.09 273.39 M385.92 272.15 L389.42 275.30 M385.24 274.05 L388.74 277.20 M384.57 275.96 L388.07 279.11 M383.89 277.86 L387.39 281.01 M383.22 279.77 L386.72 282.92 M382.54 281.68 L386.04 284.83 M381.86 283.58 L385.36 286.73 M381.19 285.49 L384.69 288.64 M380.51 287.39 L384.01 290.54 M379.84 289.30 L383.34 292.45 M379.16 291.20 L382.66 294.35 M378.49 293.11 L381.99 296.26 M377.81 295.01 L381.31 298.16 M377.14 296.92 L380.64 300.07 M376.46 298.82 L379.96 301.97 M375.78 300.73 L379.28 303.88 M375.11 302.64 L378.61 305.79 M374.43 304.54 L377.93 307.69 M373.76 306.45 L377.26 309.60 M373.08 308.35 L376.58 311.50 M372.41 310.26 L375.91 313.41 M371.73 312.16 L375.23 315.31 M371.05 314.07 L374.55 317.22 M370.38 315.97 L373.88 319.12 M369.70 317.88 L373.20 321.03 M369.03 319.78 L372.53 322.93 M368.35 321.69 L371.85 324.84 M367.68 323.59 L371.18 326.74 M367.00 325.50 L370.50 328.65 M366.32 327.41 L369.82 330.56 M365.65 329.31 L369.15 332.46 M364.97 331.22 L368.47 334.37 M364.30 333.12 L367.80 336.27 M363.62 335.03 L367.12 338.18 M362.95 336.93 L366.45 340.08 M362.27 338.84 L365.77 341.99 M361.59 340.74 L365.09 343.89 M360.92 342.65 L364.42 345.80 M360.24 344.55 L363.74 347.70 M359.57 346.46 L363.07 349.61 M358.89 348.36 L362.39 351.51 M358.22 350.27 L361.72 353.42 M357.54 352.18 L361.04 355.33 M356.86 354.08 L360.36 357.23 M356.19 355.99 L359.69 359.14 M355.51 357.89 L359.01 361.04 M354.84 359.80 L358.34 362.95 M354.16 361.70 L357.66 364.85 M353.49 363.61 L356.99 366.76 M352.81 365.51 L356.31 368.66 M352.14 367.42 L355.64 370.57 M351.46 369.32 L354.96 372.47 M350.78 371.23 L354.28 374.38 M350.11 373.14 L353.61 376.29 M349.43 375.04 L352.93 378.19 M348.76 376.95 L352.26 380.10 M348.08 378.85 L351.58 382.00 M347.41 380.76 L350.91 383.91 M346.73 382.66 L350.23 385.81 M346.05 384.57 L349.55 387.72 M345.38 386.47 L348.88 389.62 M344.70 388.38 L348.20 391.53 M344.03 390.28 L347.53 393.43 M343.35 392.19 L346.85 395.34 M342.68 394.09 L346.18 397.24 M342.00 396.00 L345.50 399.15 " stroke="#b4b4b4" stroke-width="0.7" fill="none"/>
<path d="M229.00 396.90 L231.80 400.00 M231.02 396.90 L233.82 400.00 M233.04 396.90 L235.84 400.00 M235.05 396.90 L237.85 400.00 M237.07 396.90 L239.87 400.00 M239.09 396.90 L241.89 400.00 M241.11 396.90 L243.91 400.00 M243.12 396.90 L245.93 400.00 M245.14 396.90 L247.94 400.00 M247.16 396.90 L249.96 400.00 M249.18 396.90 L251.98 400.00 M251.20 396.90 L254.00 400.00 M253.21 396.90 L256.01 400.00 M255.23 396.90 L258.03 400.00 M257.25 396.90 L260.05 400.00 M259.27 396.90 L262.07 400.00 M261.29 396.90 L264.09 400.00 M263.30 396.90 L266.10 400.00 M265.32 396.90 L268.12 400.00 M267.34 396.90 L270.14 400.00 M269.36 396.90 L272.16 400.00 M271.38 396.90 L274.18 400.00 M273.39 396.90 L276.19 400.00 M275.41 396.90 L278.21 400.00 M277.43 396.90 L280.23 400.00 M279.45 396.90 L282.25 400.00 M281.46 396.90 L284.26 400.00 M283.48 396.90 L286.28 400.00 M285.50 396.90 L288.30 400.00 M287.52 396.90 L290.32 400.00 M289.54 396.90 L292.34 400.00 M291.55 396.90 L294.35 400.00 M293.57 396.90 L296.37 400.00 M295.59 396.90 L298.39 400.00 M297.61 396.90 L300.41 400.00 M299.62 396.90 L302.43 400.00 M301.64 396.90 L304.44 400.00 M303.66 396.90 L306.46 400.00 M305.68 396.90 L308.48 400.00 M307.70 396.90 L310.50 400.00 M309.71 396.90 L312.51 400.00 M311.73 396.90 L314.53 400.00 M313.75 396.90 L316.55 400.00 M315.77 396.90 L318.57 400.00 M317.79 396.90 L320.59 400.00 M319.80 396.90 L322.60 400.00 M321.82 396.90 L324.62 400.00 M323.84 396.90 L326.64 400.00 M325.86 396.90 L328.66 400.00 M327.88 396.90 L330.68 400.00 M329.89 396.90 L332.69 400.00 M331.91 396.90 L334.71 400.00 M333.93 396.90 L336.73 400.00 M335.95 396.90 L338.75 400.00 M337.96 396.90 L340.76 400.00 M339.98 396.90 L342.78 400.00 M342.00 396.90 L344.80 400.00 " stroke="#94bf94" stroke-width="0.85" fill="none"/>
<path d="M302.10 254.30 L391.50 254.30 L341.50 396.25 L228.60 396.25 L251.05 333.00 L264.30 333.00 L279.11 285.60 L291.30 285.60 Z" fill="#04f80a" stroke="#063" stroke-width="0"/>
<line x1="296.68" y1="270" x2="385.97" y2="270" stroke="#0b4a0b" stroke-width="1.1"/>
<line x1="279.11" y1="285.6" x2="380.47" y2="285.6" stroke="#0b4a0b" stroke-width="1.1"/>
<line x1="274.18" y1="301.4" x2="374.91" y2="301.4" stroke="#0b4a0b" stroke-width="1.1"/>
<line x1="269.24" y1="317.2" x2="369.34" y2="317.2" stroke="#0b4a0b" stroke-width="1.1"/>
<line x1="251.05" y1="333.0" x2="363.78" y2="333.0" stroke="#0b4a0b" stroke-width="1.1"/>
<line x1="245.44" y1="348.8" x2="358.21" y2="348.8" stroke="#0b4a0b" stroke-width="1.1"/>
<line x1="239.91" y1="364.4" x2="352.72" y2="364.4" stroke="#0b4a0b" stroke-width="1.1"/>
<line x1="234.26" y1="380.3" x2="347.12" y2="380.3" stroke="#0b4a0b" stroke-width="1.1"/>
<path d="M302.10 254.30 L391.50 254.30 L341.50 396.25 L228.60 396.25 L251.05 333.00 L264.30 333.00 L279.11 285.60 L291.30 285.60 Z" fill="none" stroke="#0b4a0b" stroke-width="1.1"/>
<path d="M359.60 254.00 L359.10 255.73 L358.44 258.12 L357.65 260.96 L356.74 264.01 L355.75 267.07 L354.70 269.90 L353.57 272.55 L352.33 275.20 L351.01 277.85 L349.62 280.50 L348.18 283.15 L346.70 285.80 L345.17 288.45 L343.58 291.10 L341.94 293.75 L340.25 296.40 L338.54 299.05 L336.80 301.70 L335.06 304.36 L333.32 307.02 L331.55 309.68 L329.72 312.34 L327.81 314.98 L325.80 317.60 L323.67 320.19 L321.45 322.75 L319.14 325.29 L316.77 327.84 L314.35 330.40 L311.90 333.00 L309.42 335.64 L306.89 338.30 L304.32 340.98 L301.69 343.67 L298.98 346.34 L296.20 349.00 L293.36 351.63 L290.47 354.25 L287.52 356.86 L284.47 359.47 L281.31 362.08 L278.00 364.70 L274.55 367.34 L270.98 369.99 L267.29 372.64 L263.50 375.28 L259.60 377.91 L255.60 380.50 L251.16 383.23 L246.21 386.14 L241.15 389.04 L236.40 391.71 L232.38 393.97 L229.50 395.60" fill="none" stroke="#0e4a0e" stroke-width="0.55"/>
<text x="314.3" y="268.8" font-family="Liberation Sans, sans-serif" font-size="4.6" fill="#1c601c" textLength="21.4" lengthAdjust="spacingAndGlyphs">Lf=3,33 m</text>
<text x="359.3" y="274.8" font-family="Liberation Sans, sans-serif" font-size="4.6" fill="#1c601c" textLength="21.4" lengthAdjust="spacingAndGlyphs">Lf=4,30 m</text>
<text x="307.9" y="284.4" font-family="Liberation Sans, sans-serif" font-size="4.6" fill="#1c601c" textLength="21.4" lengthAdjust="spacingAndGlyphs">Lf=2,43 m</text>
<text x="352.9" y="290.5" font-family="Liberation Sans, sans-serif" font-size="4.6" fill="#1c601c" textLength="21.4" lengthAdjust="spacingAndGlyphs">Lf=1,33 m</text>
<text x="295" y="300.3" font-family="Liberation Sans, sans-serif" font-size="4.6" fill="#1c601c" textLength="21.4" lengthAdjust="spacingAndGlyphs">Lf=1,78 m</text>
<text x="345.4" y="306.3" font-family="Liberation Sans, sans-serif" font-size="4.6" fill="#1c601c" textLength="21.4" lengthAdjust="spacingAndGlyphs">Lf=1,73 m</text>
<text x="286" y="316.0" font-family="Liberation Sans, sans-serif" font-size="4.6" fill="#1c601c" textLength="21.4" lengthAdjust="spacingAndGlyphs">Lf=1,59 m</text>
<text x="336.8" y="321.9" font-family="Liberation Sans, sans-serif" font-size="4.6" fill="#1c601c" textLength="21.4" lengthAdjust="spacingAndGlyphs">Lf=1,97 m</text>
<text x="276.8" y="332.0" font-family="Liberation Sans, sans-serif" font-size="4.6" fill="#1c601c" textLength="21.4" lengthAdjust="spacingAndGlyphs">Lf=1,23 m</text>
<text x="327" y="338.0" font-family="Liberation Sans, sans-serif" font-size="4.6" fill="#1c601c" textLength="21.4" lengthAdjust="spacingAndGlyphs">Lf=2,31 m</text>
<text x="260.7" y="347.6" font-family="Liberation Sans, sans-serif" font-size="4.6" fill="#1c601c" textLength="21.4" lengthAdjust="spacingAndGlyphs">Lf=1,24 m</text>
<text x="316.4" y="353.4" font-family="Liberation Sans, sans-serif" font-size="4.6" fill="#1c601c" textLength="21.4" lengthAdjust="spacingAndGlyphs">Lf=2,75 m</text>
<text x="247.9" y="363.4" font-family="Liberation Sans, sans-serif" font-size="4.6" fill="#1c601c" textLength="21.4" lengthAdjust="spacingAndGlyphs">Lf=1,08 m</text>
<text x="304.6" y="369.2" font-family="Liberation Sans, sans-serif" font-size="4.6" fill="#1c601c" textLength="21.4" lengthAdjust="spacingAndGlyphs">Lf=3,22 m</text>
<text x="237" y="379.2" font-family="Liberation Sans, sans-serif" font-size="4.6" fill="#1c601c" textLength="21.4" lengthAdjust="spacingAndGlyphs">Lf=0,93 m</text>
<text x="290.7" y="385.0" font-family="Liberation Sans, sans-serif" font-size="4.6" fill="#1c601c" textLength="21.4" lengthAdjust="spacingAndGlyphs">Lf=4,07 m</text>
<text x="229.6" y="395.0" font-family="Liberation Sans, sans-serif" font-size="4.6" fill="#1c601c" textLength="21.4" lengthAdjust="spacingAndGlyphs">Lf=0,00 m</text>
<text x="274.6" y="401.3" font-family="Liberation Sans, sans-serif" font-size="4.6" fill="#1c601c" textLength="21.4" lengthAdjust="spacingAndGlyphs">Lf=5,00 m</text>
<line x1="233.6" y1="112.4" x2="229.4" y2="396" stroke="#8a8a8a" stroke-width="0.8"/>
<line x1="233.6" y1="112.4" x2="360" y2="253.8" stroke="#555" stroke-width="0.8"/>
<text x="233.2" y="117.9" font-family="Liberation Sans, sans-serif" font-size="5.2" fill="#111" textLength="29" lengthAdjust="spacingAndGlyphs">(X-7,(2,8.50)</text>
<text x="352.5" y="108.3" font-family="Liberation Sans, sans-serif" font-weight="bold" font-size="10.6" fill="#5e1010" stroke="#5e1010" stroke-width="0.3" textLength="73.5" lengthAdjust="spacingAndGlyphs">Meccanismo</text>
<text x="431.9" y="108.3" font-family="Liberation Sans, sans-serif" font-weight="bold" font-size="10.6" fill="#5e1010" stroke="#5e1010" stroke-width="0.3" textLength="10.1" lengthAdjust="spacingAndGlyphs">di</text>
<text x="446.2" y="108.3" font-family="Liberation Sans, sans-serif" font-weight="bold" font-size="10.6" fill="#5e1010" stroke="#5e1010" stroke-width="0.3" textLength="42.3" lengthAdjust="spacingAndGlyphs">rottura</text>
<text x="493.2" y="108.3" font-family="Liberation Sans, sans-serif" font-weight="bold" font-size="10.6" fill="#5e1010" stroke="#5e1010" stroke-width="0.3" textLength="68.5" lengthAdjust="spacingAndGlyphs">rotazionale</text>
<text x="567.6" y="108.3" font-family="Liberation Sans, sans-serif" font-weight="bold" font-size="10.6" fill="#5e1010" stroke="#5e1010" stroke-width="0.3" textLength="46.4" lengthAdjust="spacingAndGlyphs">(spirale</text>
<text x="618.5" y="108.3" font-family="Liberation Sans, sans-serif" font-weight="bold" font-size="10.6" fill="#5e1010" stroke="#5e1010" stroke-width="0.3" textLength="74.5" lengthAdjust="spacingAndGlyphs">logaritmica)</text>
<rect x="101.6" y="303.5" width="95.6" height="34.5" fill="#ccffff" stroke="#6a6a6a" stroke-width="0.8"/>
<text x="105.8" y="309.4" font-family="Liberation Serif, serif" font-size="7.0" fill="#111" stroke="#111" stroke-width="0.05" textLength="33.5" lengthAdjust="spacingAndGlyphs">Cerchio= 129</text>
<text x="105.8" y="316.3" font-family="Liberation Serif, serif" font-size="7.0" fill="#111" stroke="#111" stroke-width="0.05" textLength="42.5" lengthAdjust="spacingAndGlyphs">Combinazione= 1</text>
<text x="105.8" y="323.2" font-family="Liberation Serif, serif" font-size="7.0" fill="#111" stroke="#111" stroke-width="0.05" textLength="27" lengthAdjust="spacingAndGlyphs">FS= 32,01</text>
<text x="105.8" y="330.1" font-family="Liberation Serif, serif" font-size="7.0" fill="#111" stroke="#111" stroke-width="0.05" textLength="36" lengthAdjust="spacingAndGlyphs">FSmin_c= 0,00</text>
<text x="105.8" y="337" font-family="Liberation Serif, serif" font-size="7.0" fill="#111" stroke="#111" stroke-width="0.05" textLength="36" lengthAdjust="spacingAndGlyphs">FSmin_a= 0,00</text>
<line x1="403.6" y1="265.5" x2="403.6" y2="400.5" stroke="#333" stroke-width="0.8"/>
<rect x="403.6" y="266" width="1.20" height="8" fill="#7b78ee" stroke="#2a2a4a" stroke-width="0.6"/>
<rect x="403.6" y="281" width="1.90" height="8" fill="#7b78ee" stroke="#2a2a4a" stroke-width="0.6"/>
<rect x="403.6" y="297" width="3.20" height="8" fill="#7b78ee" stroke="#2a2a4a" stroke-width="0.6"/>
<rect x="403.6" y="313" width="4.20" height="8" fill="#7b78ee" stroke="#2a2a4a" stroke-width="0.6"/>
<rect x="403.6" y="329" width="6.40" height="8" fill="#7b78ee" stroke="#2a2a4a" stroke-width="0.6"/>
<rect x="403.6" y="345.3" width="9.60" height="7.899999999999977" fill="#7b78ee" stroke="#2a2a4a" stroke-width="0.6"/>
<rect x="403.6" y="361.3" width="12.60" height="7.5" fill="#7b78ee" stroke="#2a2a4a" stroke-width="0.6"/>
<rect x="403.6" y="376.6" width="15.20" height="8.099999999999966" fill="#7b78ee" stroke="#2a2a4a" stroke-width="0.6"/>
<rect x="403.6" y="392.6" width="18.00" height="8.099999999999966" fill="#7b78ee" stroke="#2a2a4a" stroke-width="0.6"/>
<text x="412.8" y="271.1" font-family="Liberation Serif, serif" font-size="5.8" fill="#000" stroke="#000" stroke-width="0.12" textLength="56.5" lengthAdjust="spacingAndGlyphs">z =-0,70 m - F =83,03 kg/m</text>
<text x="413.8" y="286.4" font-family="Liberation Serif, serif" font-size="5.8" fill="#000" stroke="#000" stroke-width="0.12" textLength="59.2" lengthAdjust="spacingAndGlyphs">z =-1,39 m - F =180,82 kg/m</text>
<text x="415.3" y="302.2" font-family="Liberation Serif, serif" font-size="5.8" fill="#000" stroke="#000" stroke-width="0.12" textLength="59.5" lengthAdjust="spacingAndGlyphs">z =-2,09 m - F =301,67 kg/m</text>
<text x="416.6" y="317.8" font-family="Liberation Serif, serif" font-size="5.8" fill="#000" stroke="#000" stroke-width="0.12" textLength="59.5" lengthAdjust="spacingAndGlyphs">z =-2,79 m - F =460,95 kg/m</text>
<text x="418.5" y="333.4" font-family="Liberation Serif, serif" font-size="5.8" fill="#000" stroke="#000" stroke-width="0.12" textLength="59.5" lengthAdjust="spacingAndGlyphs">z =-3,49 m - F =674,98 kg/m</text>
<text x="421.3" y="349.4" font-family="Liberation Serif, serif" font-size="5.8" fill="#000" stroke="#000" stroke-width="0.12" textLength="59.5" lengthAdjust="spacingAndGlyphs">z =-4,20 m - F =960,92 kg/m</text>
<text x="424" y="365.2" font-family="Liberation Serif, serif" font-size="5.8" fill="#000" stroke="#000" stroke-width="0.12" textLength="62" lengthAdjust="spacingAndGlyphs">z =-4,90 m - F =1266,42 kg/m</text>
<text x="427.3" y="381.0" font-family="Liberation Serif, serif" font-size="5.8" fill="#000" stroke="#000" stroke-width="0.12" textLength="62" lengthAdjust="spacingAndGlyphs">z =-5,60 m - F =1570,48 kg/m</text>
<text x="429.7" y="396.8" font-family="Liberation Serif, serif" font-size="5.8" fill="#000" stroke="#000" stroke-width="0.12" textLength="62" lengthAdjust="spacingAndGlyphs">z =-6,30 m - F =1839,80 kg/m</text>
<text x="404.8" y="413.6" font-family="Liberation Serif, serif" font-size="5.8" fill="#000" stroke="#000" stroke-width="0.12" textLength="39.5" lengthAdjust="spacingAndGlyphs">ΣF = 7340,87 kg/m</text>
</g>
<rect x="824.3" y="63" width="15.7" height="368.3" fill="url(#gside)"/>
<rect x="824.3" y="63" width="15.7" height="32.5" fill="#eceef2"/>
<rect x="827.8" y="72.3" width="8.6" height="6.3" fill="#c8d0dc" stroke="#4a5a7a" stroke-width="0.8"/>
<text x="826.5" y="94" font-family="Liberation Sans, sans-serif" font-size="9" font-weight="bold" fill="#3a3a80">?</text><rect x="831.5" y="89.5" width="4.5" height="3.8" fill="#8898b8"/>
<rect x="0" y="431.3" width="840" height="12.2" fill="url(#gbot)"/>
<rect x="181.4" y="431.8" width="61" height="11.5" fill="#ffffff"/>
<text x="187" y="440.3" font-family="Liberation Sans, sans-serif" font-size="5.8" fill="#1a1a1a" stroke="#1a1a1a" stroke-width="0.05" textLength="49.7" lengthAdjust="spacingAndGlyphs">X = 0,55; &#160;Y = -7,80</text>
<rect x="243.8" y="431.8" width="14" height="11.5" fill="#d6e4ea"/>
<rect x="258.4" y="431.8" width="89.6" height="11.5" fill="#ffffff"/>
<text x="291" y="440.3" font-family="Liberation Sans, sans-serif" font-size="5.8" fill="#1a1a1a" stroke="#1a1a1a" stroke-width="0.05" textLength="23.8" lengthAdjust="spacingAndGlyphs">1 - A1-M1</text>
<rect x="392.9" y="431.8" width="16.5" height="11.5" fill="#dde6e8"/>
<rect x="410" y="431.8" width="60" height="11.5" fill="#ffffff"/>
<text x="422.4" y="440.3" font-family="Liberation Sans, sans-serif" font-size="5.8" fill="#1a1a1a" stroke="#1a1a1a" stroke-width="0.05" textLength="34.6" lengthAdjust="spacingAndGlyphs">Cerchio n. 129</text>
<path d="M252.0 435.8 H248.0 V433.8 L244.5 437.2 L248.0 440.6 V438.6 H252.0 Z" fill="#2aa0a8"/>
<path d="M352 435.8 H356 V433.8 L359.5 437.2 L356 440.6 V438.6 H352 Z" fill="#2aa0a8"/>
<path d="M405.1 435.8 H401.1 V433.8 L397.6 437.2 L401.1 440.6 V438.6 H405.1 Z" fill="#1a6a4a"/>
<path d="M473.8 435.8 H477.8 V433.8 L481.3 437.2 L477.8 440.6 V438.6 H473.8 Z" fill="#1a7a4a"/>
<g transform="translate(2.5,432.5)"><circle cx="4.5" cy="3.6" r="2.8" fill="#f4f4f4" stroke="#555" stroke-width="0.7"/><path d="M2.5 5.6 L0.5 8.6" stroke="#555" stroke-width="1"/><path d="M3.2 3.6 H5.8 M4.5 2.3 V4.9" stroke="#444" stroke-width="0.5"/></g>
<g transform="translate(16.5,432.5)"><path d="M0 5 H2.6 L1.3 6.4 Z" fill="#222"/></g>
<g transform="translate(24,432.5)"><path d="M3 0.5 H5.5 V3 H8.5 V5.5 H5.5 V8.5 H3 V5.5 H0 V3 H3 Z" fill="#2a6ad0"/></g>
<g transform="translate(37.5,432.5)"><path d="M0 5 H2.6 L1.3 6.4 Z" fill="#222"/></g>
<g transform="translate(45,432.5)"><circle cx="3.3" cy="4.3" r="3" fill="#f8f8f8" stroke="#d8d8d8" stroke-width="0.4"/></g>
<g transform="translate(57.5,432.5)"><path d="M1 2 Q4 0 6 3 T8.5 8" stroke="#9a70b8" stroke-width="1" fill="none"/><path d="M2 5 Q5 3 7 6" stroke="#3a9a60" stroke-width="0.7" fill="none"/></g>
<g transform="translate(72.5,432.5)"><path d="M0.5 7.5 L7.5 1 L5 7 Z" fill="#1a1a2a"/><path d="M1 4 L5 5" stroke="#1a1a2a" stroke-width="1.3"/></g>
<g transform="translate(85,432.5)"><path d="M0.5 1.5 H9.5 V4.5 Q9.5 7.5 5 9 Q0.5 7.5 0.5 4.5 Z" fill="#d04848"/><rect x="2" y="1.8" width="6" height="1.8" fill="#f4d0d0"/></g>
<g transform="translate(100.8,432.5)"><text x="0" y="8.6" font-family="Liberation Sans, sans-serif" font-size="11" font-weight="bold" fill="#2a3aa0">T</text></g>
<g transform="translate(113,432.5)"><circle cx="4.6" cy="4.5" r="4.3" fill="#4a8ad8"/><path d="M3 3.5 Q4.6 1.5 6 3.5 Q6 5 4.6 5.5" stroke="#fff" stroke-width="0.9" fill="none"/></g>
<g transform="translate(127.5,432.5)"><rect x="0.5" y="2" width="8" height="5" fill="#d8ecd8" stroke="#4a8a6a" stroke-width="0.5"/><rect x="0.5" y="1" width="8" height="1" fill="#3a6a6a"/></g>
<g transform="translate(142.4,432.5)"><rect x="0.5" y="0.5" width="8" height="8.5" fill="#c8a098" stroke="#7a5a5a" stroke-width="0.6"/><line x1="4.5" y1="0.5" x2="4.5" y2="9" stroke="#8a6a6a" stroke-width="0.5"/></g>
<g transform="translate(156.7,432.5)"><path d="M0.5 0.5 H5.5 L7.5 2.5 V9 H0.5 Z" fill="#f4f4f4" stroke="#aaa" stroke-width="0.4"/><circle cx="5" cy="6.3" r="2.3" fill="#8a8a50"/></g>
<g transform="translate(171,432.5)"><path d="M0.5 0.5 H5 L7 2.5 V9 H0.5 Z" fill="#f4f4f4" stroke="#bbb" stroke-width="0.4"/></g>
<g transform="translate(366,432.5)"><path d="M0.5 9 L4 0.5 L8 9 H6 L4 4.5 L2.5 9 Z" fill="#2a8a3a"/><path d="M5 5 L8.5 8" stroke="#c03030" stroke-width="1.2"/></g>
<g transform="translate(380.5,432.5)"><rect x="0.5" y="1" width="7.5" height="7" fill="#f0f0f8" stroke="#3a3a6a" stroke-width="0.8"/><rect x="0.5" y="1" width="7.5" height="1.8" fill="#3a3a6a"/><line x1="1" y1="5" x2="7.5" y2="5" stroke="#3a3a6a" stroke-width="0.6"/></g>
<g transform="translate(487,432.5)"><path d="M1 1 H7 L8 4 Q8 8.5 4 8.8 Q0.5 8 1 4 Z" fill="#f0d8a0" stroke="#a06a30" stroke-width="0.6"/></g>
<g transform="translate(500.5,432.5)"><rect x="0.5" y="2" width="8.5" height="7" fill="#f0c8a8" stroke="#c04040" stroke-width="0.6"/><path d="M2 1 V3 M6 1 V3" stroke="#c02020" stroke-width="0.8"/><path d="M2 5 Q4.5 3.5 7 5" stroke="#c02020" stroke-width="0.8" fill="none"/></g>
<rect x="0" y="443.5" width="840" height="9.5" fill="#efefef"/>
<line x1="0" y1="443.1" x2="840" y2="443.1" stroke="#fafafa" stroke-width="0.8"/>
<line x1="0" y1="445.1" x2="840" y2="445.1" stroke="#d6d6d6" stroke-width="0.9"/>
<line x1="664.8" y1="445" x2="664.8" y2="453" stroke="#d0d0d0" stroke-width="0.6"/>
<line x1="838" y1="445" x2="838" y2="453" stroke="#d0d0d0" stroke-width="0.6"/>
<text x="5.8" y="451.9" font-family="Liberation Sans, sans-serif" font-size="5.2" fill="#1a1a1a" textLength="229" lengthAdjust="spacingAndGlyphs">Aztec Informatica s.r.l. * Corso Umberto I, 43 - 87050 Casole Bruzio (CS) &#160;- www.aztec.it * aztec@aztec.it</text>
</svg></body></html>
